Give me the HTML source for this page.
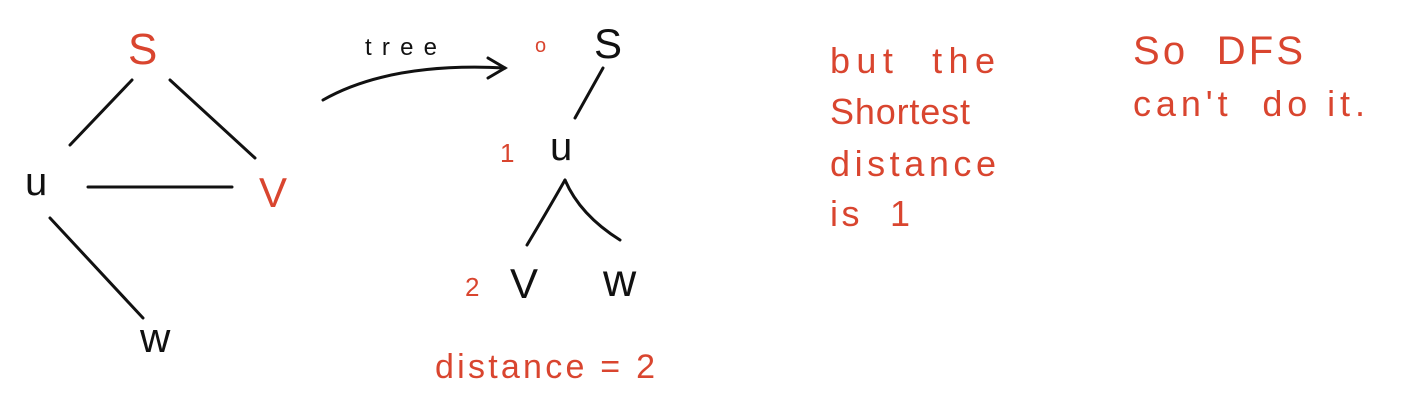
<!DOCTYPE html>
<html><head><meta charset="utf-8"><style>
html,body{margin:0;padding:0;background:#fff;}
svg{display:block}
text{font-family:"Liberation Sans",sans-serif;}
.r{fill:#d9452f}
.k{fill:#111}
</style></head><body>
<svg width="1407" height="412" viewBox="0 0 1407 412" xmlns="http://www.w3.org/2000/svg">
<g stroke="#111" stroke-width="3" stroke-linecap="round" fill="none">
<line x1="70" y1="145" x2="132" y2="80"/>
<line x1="170" y1="80" x2="255" y2="158"/>
<line x1="88" y1="187" x2="232" y2="187"/>
<line x1="50" y1="218" x2="143" y2="318"/>
<path d="M323 100 Q390 62 505 68"/>
<path d="M488 58 L505 68 L488 78"/>
<line x1="603" y1="68" x2="575" y2="118"/>
<path d="M565 180 Q545 215 527 245"/>
<path d="M565 180 Q580 215 620 240"/>
</g>
<text class="r" x="128" y="64" font-size="44">S</text>
<text class="k" x="25" y="195" font-size="40">u</text>
<text class="r" x="259" y="207" font-size="42">V</text>
<text class="k" x="140" y="352" font-size="42">w</text>
<text class="k" x="365" y="55" font-size="24" textLength="72" lengthAdjust="spacing">tree</text>
<text class="r" x="535" y="52" font-size="20">o</text>
<text class="k" x="594" y="58" font-size="42">S</text>
<text class="r" x="500" y="162" font-size="26">1</text>
<text class="k" x="550" y="160" font-size="40">u</text>
<text class="r" x="465" y="296" font-size="26">2</text>
<text class="k" x="510" y="298" font-size="42">V</text>
<text class="k" x="603" y="296" font-size="46">w</text>
<text class="r" x="435" y="378" font-size="34" textLength="220" lengthAdjust="spacing">distance = 2</text>
<text class="r" x="830" y="73" font-size="36" textLength="165" lengthAdjust="spacing">but&#160;&#160;the</text>
<text class="r" x="830" y="124" font-size="36" textLength="140" lengthAdjust="spacing">Shortest</text>
<text class="r" x="830" y="176" font-size="36" textLength="166" lengthAdjust="spacing">distance</text>
<text class="r" x="830" y="226" font-size="36" textLength="80" lengthAdjust="spacing">is&#160;&#160;1</text>
<text class="r" x="1133" y="64" font-size="40" textLength="170" lengthAdjust="spacing">So&#160;&#160;DFS</text>
<text class="r" x="1133" y="116" font-size="36" textLength="232" lengthAdjust="spacing">can't&#160;&#160;do&#160;it.</text>
</svg>
</body></html>
